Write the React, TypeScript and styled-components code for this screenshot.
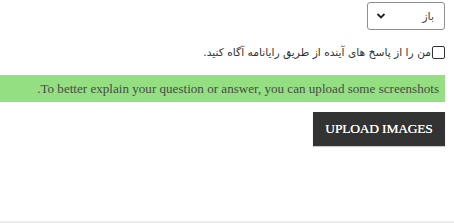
import * as React from 'react';
import styled, { createGlobalStyle } from 'styled-components';

const GlobalStyle = createGlobalStyle`
  html, body {
    margin: 0;
    padding: 0;
    background: #fff;
  }
`;

const Page = styled.div`
  direction: rtl;
  width: 454px;
  height: 223px;
  box-sizing: border-box;
  border-bottom: 2px solid #ececec;
  padding: 2px 9px 0 0;
  display: flex;
  flex-direction: column;
  align-items: flex-start;
`;

const SelectBox = styled.div`
  width: 78px;
  height: 28px;
  box-sizing: border-box;
  border: 1px solid #8f8f8f;
  border-radius: 3px;
  display: flex;
  align-items: center;
  justify-content: space-between;
  padding: 0 10px 0 8px;
  font-family: Tahoma, 'DejaVu Sans', sans-serif;
  font-size: 11px;
  color: #444;
`;

const NotifyRow = styled.label`
  margin-top: 16px;
  display: flex;
  align-items: center;
  gap: 1px;
  font-family: Tahoma, 'DejaVu Sans', sans-serif;
  font-size: 10.7px;
  color: #333;
`;

const Box = styled.span`
  width: 11px;
  height: 11px;
  border: 1px solid #333;
  border-radius: 2px;
  background: #fff;
`;

const Notice = styled.div`
  margin-top: 16px;
  align-self: stretch;
  height: 27px;
  background: #93df82;
  display: flex;
  align-items: center;
  padding-right: 6px;
  font-family: 'Liberation Serif', 'Times New Roman', serif;
  font-size: 13.1px;
  color: #4a4a4a;
`;

const UploadButton = styled.button`
  margin-top: 10px;
  width: 132px;
  height: 34px;
  border: none;
  background: #333;
  color: #fff;
  font-family: 'Liberation Serif', 'Times New Roman', serif;
  font-size: 13.5px;
  letter-spacing: -0.2px;
  text-shadow: 0 0 0.4px #fff;
  box-shadow: 0 1px 1px #ccc;
`;

export default function App() {
  return (
    <>
      <GlobalStyle />
      <Page>
        <SelectBox>
          <span>باز</span>
          <svg width="10" height="8" viewBox="0 0 10 8">
            <path d="M1.5 2 L5 5.5 L8.5 2" stroke="#222" strokeWidth="1.8" fill="none" />
          </svg>
        </SelectBox>
        <NotifyRow>
          <Box />
          <span>من را از پاسخ های آینده از طریق رایانامه آگاه کنید.</span>
        </NotifyRow>
        <Notice>To better explain your question or answer, you can upload some screenshots.</Notice>
        <UploadButton>UPLOAD IMAGES</UploadButton>
      </Page>
    </>
  );
}
